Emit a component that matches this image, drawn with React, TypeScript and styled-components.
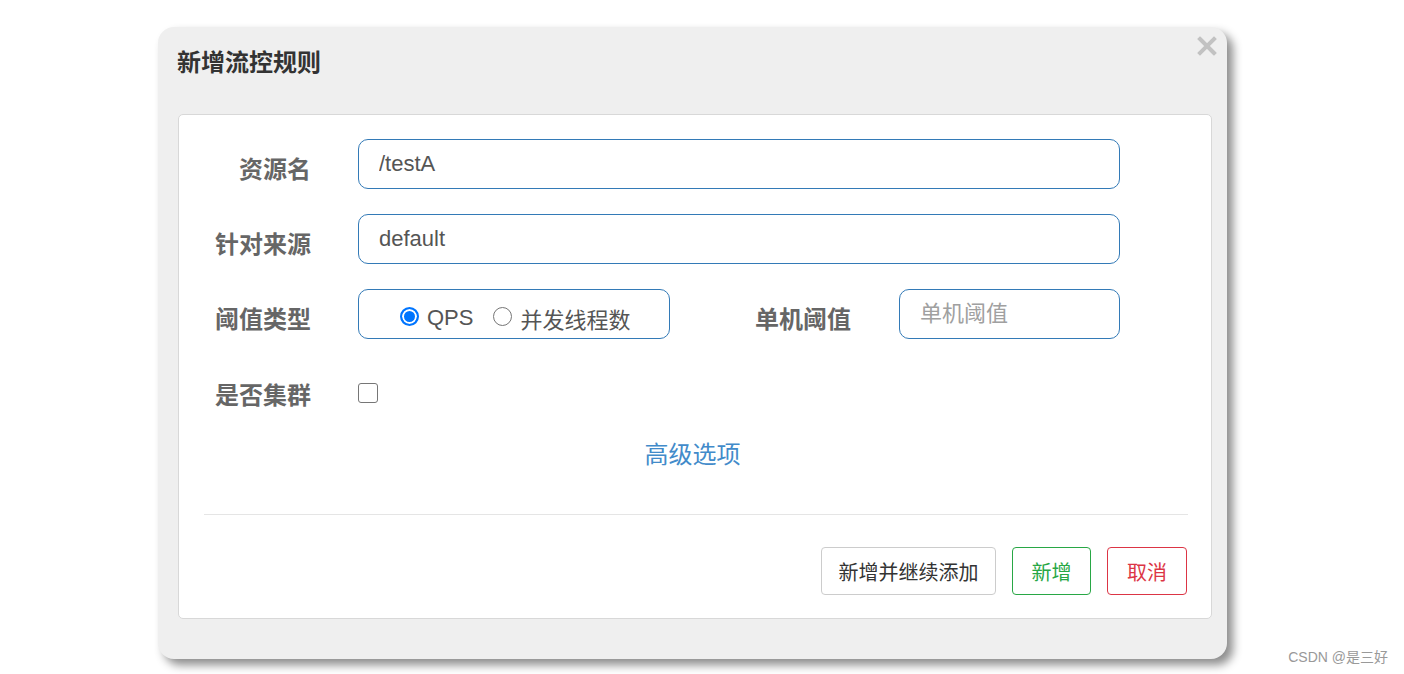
import React from "react";
import styled, { createGlobalStyle } from "styled-components";

const Global = createGlobalStyle`
  html, body { margin: 0; padding: 0; background: #fff; }
  body { font-family: "Liberation Sans", "Noto Sans CJK SC", sans-serif; }
  * { box-sizing: border-box; }
`;

const Page = styled.div`
  position: relative;
  width: 1404px;
  height: 674px;
  padding: 27px 0 0 158px;
  overflow: hidden;
`;

const Modal = styled.div`
  width: 1069px;
  height: 632px;
  background: #efefef;
  border-radius: 16px;
  box-shadow: 6px 6px 10px rgba(0, 0, 0, 0.45);
  display: flex;
  flex-direction: column;
`;

const Header = styled.div`
  height: 87px;
  display: flex;
  justify-content: space-between;
  align-items: flex-start;
  padding: 0 9px 0 19px;
`;

const Title = styled.h4`
  margin: 21px 0 0;
  font-size: 24px;
  line-height: 30px;
  font-weight: 700;
  color: #333;
`;

const Close = styled.button`
  margin-top: 9px;
  width: 22px;
  height: 20px;
  padding: 0;
  border: none;
  background: transparent;
  display: flex;
  align-items: center;
  justify-content: center;
`;

const Panel = styled.div`
  margin: 0 15px 0 20px;
  height: 505px;
  background: #fff;
  border: 1px solid #d8d8d8;
  border-radius: 5px;
  padding: 24px 24px 0 19px;
  display: flex;
  flex-direction: column;
`;

const Row = styled.div<{ $mt?: number }>`
  display: flex;
  align-items: center;
  height: 50px;
  margin-top: ${(p) => p.$mt ?? 0}px;
`;

const Label = styled.label<{ $w: number; $gap: number }>`
  width: ${(p) => p.$w}px;
  margin-right: ${(p) => p.$gap}px;
  text-align: right;
  font-size: 24px;
  font-weight: 700;
  color: #666;
  padding-top: 6px;
  white-space: nowrap;
`;

const TextInput = styled.input<{ $w: number }>`
  width: ${(p) => p.$w}px;
  height: 50px;
  border: 1.5px solid #337ab7;
  border-radius: 10px;
  padding: 0 0 0 20px;
  font-family: inherit;
  font-size: 22px;
  color: #555;
  background: #fff;
  outline: none;
  &::placeholder { color: #a0a0a0; }
`;

const RadioBox = styled.div`
  width: 312px;
  height: 50px;
  border: 1.5px solid #337ab7;
  border-radius: 10px;
  display: flex;
  align-items: center;
  padding: 7px 0 0 41px;
  gap: 20px;
  font-size: 22px;
  color: #555;
`;

const RadioLabel = styled.span`
  display: flex;
  align-items: center;
  gap: 8px;
`;

const RadioDot = styled.span<{ $on?: boolean }>`
  width: 19px;
  height: 19px;
  border-radius: 50%;
  border: ${(p) => (p.$on ? "2px solid #0075ff" : "1.5px solid #767676")};
  background: ${(p) => (p.$on ? "#0075ff" : "#fff")};
  box-shadow: ${(p) => (p.$on ? "inset 0 0 0 2px #fff" : "none")};
  flex: none;
  margin-top: -3px;
`;

const Check = styled.span`
  width: 20px;
  height: 20px;
  border: 1.5px solid #767676;
  border-radius: 3px;
  background: #fff;
  margin-top: 6px;
`;

const LinkRow = styled.div`
  display: flex;
  justify-content: center;
  margin-top: 23px;
`;

const Link = styled.a`
  font-size: 24px;
  color: #428bca;
  text-decoration: none;
  line-height: 34px;
`;

const Divider = styled.hr`
  border: none;
  border-top: 1px solid #e5e5e5;
  margin: 42px 0 0 6px;
  width: 984px;
`;

const Footer = styled.div`
  display: flex;
  justify-content: flex-end;
  gap: 16px;
  margin-top: 32px;
`;

const Btn = styled.button<{ $tone: "default" | "success" | "danger"; $w: number }>`
  width: ${(p) => p.$w}px;
  height: 48px;
  background: #fff;
  border-radius: 4px;
  font-family: inherit;
  font-size: 20px;
  padding: 0;
  border: 1.5px solid
    ${(p) => (p.$tone === "success" ? "#28a745" : p.$tone === "danger" ? "#dc3545" : "#cccccc")};
  color: ${(p) => (p.$tone === "success" ? "#28a745" : p.$tone === "danger" ? "#dc3545" : "#333")};
`;

const Watermark = styled.div`
  position: absolute;
  right: 16px;
  bottom: 8px;
  font-size: 14px;
  color: #999;
  font-family: "Liberation Sans", "Noto Sans CJK SC", sans-serif;
`;

export default function App() {
  return (
    <>
      <Global />
      <Page>
        <Modal>
          <Header>
            <Title>新增流控规则</Title>
            <Close aria-label="close">
              <svg width="20" height="20" viewBox="0 0 20 20">
                <path d="M3 3 L17 17 M17 3 L3 17" stroke="#c2c2c2" strokeWidth="4" strokeLinecap="square" />
              </svg>
            </Close>
          </Header>
          <Panel>
            <Row>
              <Label $w={113} $gap={47}>资源名</Label>
              <TextInput $w={762} defaultValue="/testA" />
            </Row>
            <Row $mt={25}>
              <Label $w={113} $gap={47}>针对来源</Label>
              <TextInput $w={762} defaultValue="default" />
            </Row>
            <Row $mt={25}>
              <Label $w={113} $gap={47}>阈值类型</Label>
              <RadioBox>
                <RadioLabel>
                  <RadioDot $on />
                  QPS
                </RadioLabel>
                <RadioLabel>
                  <RadioDot />
                  并发线程数
                </RadioLabel>
              </RadioBox>
              <Label $w={181} $gap={48}>单机阈值</Label>
              <TextInput $w={221} placeholder="单机阈值" />
            </Row>
            <Row $mt={26}>
              <Label $w={113} $gap={47}>是否集群</Label>
              <Check />
            </Row>
            <LinkRow>
              <Link>高级选项</Link>
            </LinkRow>
            <Divider />
            <Footer>
              <Btn $tone="default" $w={175}>新增并继续添加</Btn>
              <Btn $tone="success" $w={79}>新增</Btn>
              <Btn $tone="danger" $w={80}>取消</Btn>
            </Footer>
          </Panel>
        </Modal>
        <Watermark>CSDN @是三好</Watermark>
      </Page>
    </>
  );
}
